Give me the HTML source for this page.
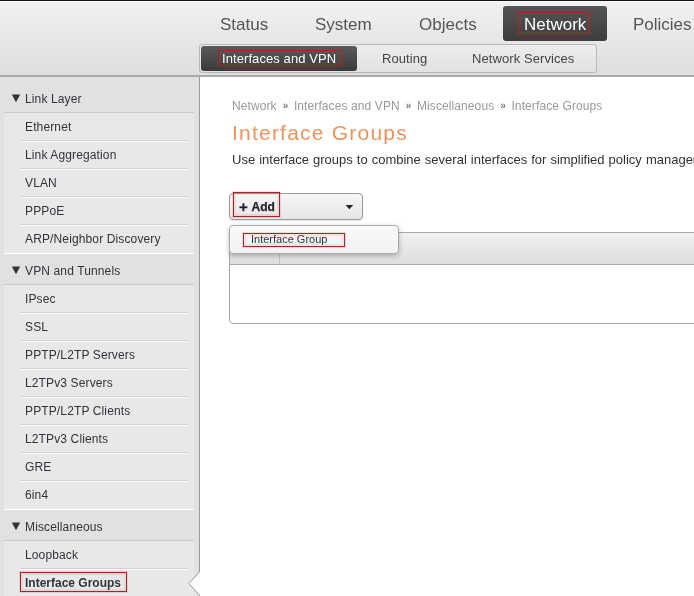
<!DOCTYPE html>
<html><head><meta charset="utf-8">
<style>
*{margin:0;padding:0;box-sizing:border-box}
html,body{width:694px;height:596px;overflow:hidden;background:#fff;font-family:"Liberation Sans",sans-serif;color:#333}
.a{position:absolute;white-space:nowrap;will-change:transform}
#hdr{position:absolute;left:0;top:0;width:694px;height:77px;background:linear-gradient(#f1f1f1,#dedede);border-top:1px solid #151515;border-bottom:2px solid #aaa}
#hdr .top1{position:absolute;left:0;top:0;width:694px;height:1px;background:#fafafa}
.nav{font-size:17px;line-height:17px;color:#555;top:16px}
#netbtn{position:absolute;left:503px;top:6px;width:104px;height:35px;border-radius:3px;background:linear-gradient(#555,#3c3c3c)}
.red{position:absolute;border:1px solid #a02628;box-shadow:0 0 0 1px rgba(200,50,50,.14),inset 0 0 0 2px rgba(210,60,60,.11)}
#sub{position:absolute;left:199px;top:44px;width:398px;height:29px;border:1px solid #b8b8b8;border-radius:3px;background:linear-gradient(#ececec,#e2e2e2)}
#subact{position:absolute;left:201px;top:46px;width:156px;height:25px;border-radius:3px;background:linear-gradient(#5a5a5a,#3a3a3a)}
.sn{font-size:13px;line-height:13px;top:52px;color:#444;letter-spacing:0.08px}
#side{position:absolute;left:0;top:77px;width:200px;height:519px;background:#e1e1e1;border-right:1px solid #999}
.box{position:absolute;left:4px;width:190px;background:#e8e8e8;border-top:1px solid #cbcbcb;border-bottom:1px solid #fff}
.sep{position:absolute;left:20px;width:169px;height:2px;border-top:1px solid #d2d2d2;border-bottom:1px solid #fafafa}
.sh{font-size:12px;line-height:12px;color:#30343a;left:25px;letter-spacing:0.13px}
.si{font-size:12px;line-height:12px;color:#30343a;left:25px;letter-spacing:0.13px}
.tri2{position:absolute;left:0}
.tri{position:absolute;left:12px;width:0;height:0;border-left:4px solid transparent;border-right:4px solid transparent;border-top:7px solid #333}

.bc{font-size:12px;line-height:12px;color:#999;letter-spacing:0.1px}
.rq{margin:0 5.5px 0 6px;font-size:10px;font-weight:bold;color:#7a7a7a;position:relative;top:-1px}
.ttl{font-size:21px;line-height:21px;color:#eb945e;letter-spacing:1.22px}
.desc{font-size:13px;line-height:13px;color:#2e3238;word-spacing:0.42px}
#tbl{position:absolute;left:229px;top:232px;width:480px;height:92px;border:1px solid #a8a8a8;border-radius:4px;background:#fff}
#thd{position:absolute;left:230px;top:233px;width:470px;height:32px;border-bottom:1px solid #aaa;background:linear-gradient(#f0f0f0,#dedede)}
#addbtn{position:absolute;left:229px;top:193px;width:134px;height:27px;border:1px solid #9a9a9a;border-radius:4px;background:linear-gradient(#f6f6f6,#e6e6e6);box-shadow:0 1px 2px rgba(0,0,0,.13)}
.addt{font-size:12px;line-height:12px;font-weight:bold;color:#1e2228;-webkit-text-stroke:0.25px #1e2228}
.caret{position:absolute;width:0;height:0;border-left:4px solid transparent;border-right:4px solid transparent;border-top:5px solid #222}
#menu{position:absolute;left:229px;top:225px;width:170px;height:29px;border:1px solid #aaa;border-radius:4px;background:linear-gradient(#fafafa,#f2f2f2);box-shadow:0 2px 5px rgba(0,0,0,.25)}
.mi{font-size:11px;line-height:11px;color:#2e3238}
</style></head><body>
<div id="hdr"><div class="top1"></div></div>
<div class="a nav" style="left:220px">Status</div>
<div class="a nav" style="left:315px">System</div>
<div class="a nav" style="left:419px">Objects</div>
<div id="netbtn"></div>
<div class="a nav" style="left:524px;color:#fff">Network</div>
<div class="red" style="left:518px;top:12px;width:72px;height:22px"></div>
<div class="a nav" style="left:633px">Policies</div>

<div id="sub"></div>
<div id="subact"></div>
<div class="a sn" style="left:222px;color:#fff">Interfaces and VPN</div>
<div class="red" style="left:218px;top:50px;width:124px;height:16px"></div>
<div class="a sn" style="left:382px">Routing</div>
<div class="a sn" style="left:472px">Network Services</div>

<div id="side"></div>
<div class="box" style="top:112px;height:142px"></div>
<div class="box" style="top:284px;height:226px"></div>
<div class="box" style="top:540px;height:60px;border-bottom:0"></div>
<svg class="tri2" style="top:92px" width="24" height="12"><polygon points="11.8,2.4 20.2,2.4 16,10.2" fill="#333"/></svg>
<div class="a sh" style="top:93px">Link Layer</div>
<div class="sep" style="top:140px"></div>
<div class="a si" style="top:121px;">Ethernet</div>
<div class="sep" style="top:168px"></div>
<div class="a si" style="top:149px;">Link Aggregation</div>
<div class="sep" style="top:196px"></div>
<div class="a si" style="top:177px;">VLAN</div>
<div class="sep" style="top:224px"></div>
<div class="a si" style="top:205px;">PPPoE</div>
<div class="a si" style="top:233px;">ARP/Neighbor Discovery</div>
<svg class="tri2" style="top:264px" width="24" height="12"><polygon points="11.8,2.4 20.2,2.4 16,10.2" fill="#333"/></svg>
<div class="a sh" style="top:265px">VPN and Tunnels</div>
<div class="sep" style="top:312px"></div>
<div class="a si" style="top:293px;">IPsec</div>
<div class="sep" style="top:340px"></div>
<div class="a si" style="top:321px;">SSL</div>
<div class="sep" style="top:368px"></div>
<div class="a si" style="top:349px;">PPTP/L2TP Servers</div>
<div class="sep" style="top:396px"></div>
<div class="a si" style="top:377px;">L2TPv3 Servers</div>
<div class="sep" style="top:424px"></div>
<div class="a si" style="top:405px;">PPTP/L2TP Clients</div>
<div class="sep" style="top:452px"></div>
<div class="a si" style="top:433px;">L2TPv3 Clients</div>
<div class="sep" style="top:480px"></div>
<div class="a si" style="top:461px;">GRE</div>
<div class="a si" style="top:489px;">6in4</div>
<svg class="tri2" style="top:520px" width="24" height="12"><polygon points="11.8,2.4 20.2,2.4 16,10.2" fill="#333"/></svg>
<div class="a sh" style="top:521px">Miscellaneous</div>
<div class="sep" style="top:568px"></div>
<div class="a si" style="top:549px;">Loopback</div>
<div class="a si" style="top:577px;font-weight:bold;letter-spacing:0">Interface Groups</div>
<div class="red" style="left:20px;top:572px;width:107px;height:20px"></div>
<svg width="16" height="26" style="position:absolute;left:186px;top:570px"><polygon points="13.5,2 2.8,13.5 13.5,25" fill="#fff" stroke="#9a9a9a" stroke-width="1"/><rect x="13" y="2.5" width="3" height="22" fill="#fff"/></svg>

<div class="a bc" style="left:232px;top:100px">Network<span class="rq">&raquo;</span>Interfaces and VPN<span class="rq">&raquo;</span>Miscellaneous<span class="rq">&raquo;</span>Interface Groups</div>
<div class="a ttl" style="left:232px;top:122px">Interface Groups</div>
<div class="a desc" style="left:232px;top:153px">Use interface groups to combine several interfaces for simplified policy management.</div>

<div id="tbl"></div>
<div id="thd"></div>
<div style="position:absolute;left:279px;top:233px;width:1px;height:31px;background:#c4c4c4"></div>

<div id="addbtn"></div>
<div class="a addt" style="left:238.7px;top:200px"><span style="font-size:15px;position:relative;top:0.5px;margin-right:3.8px">+</span>Add</div>
<div class="red" style="left:233px;top:192px;width:47px;height:25px"></div>
<svg style="position:absolute;left:340px;top:200px" width="20" height="14"><polygon points="5.6,5 13.2,5 9.4,9.3" fill="#222"/></svg>

<div id="menu"></div>
<div class="a mi" style="left:251px;top:234px">Interface Group</div>
<div class="red" style="left:243px;top:233px;width:102px;height:14px"></div>
</body></html>
